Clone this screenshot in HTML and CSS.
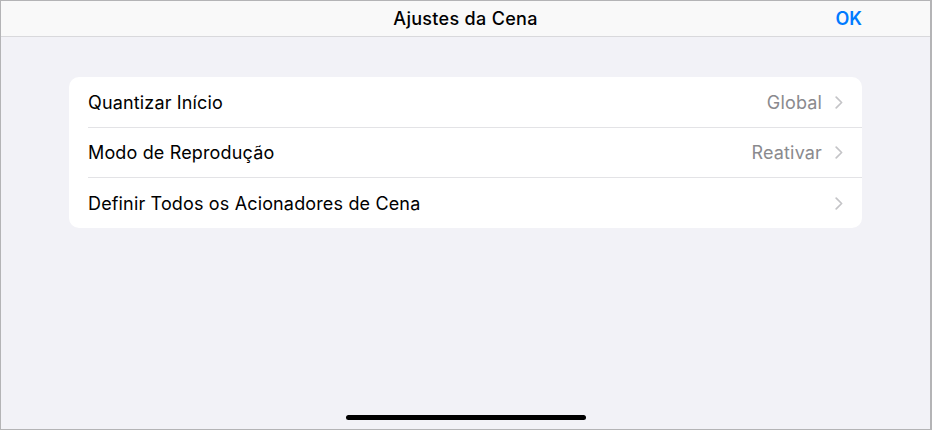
FILE: index.html
```html
<!DOCTYPE html>
<html lang="pt">
<head>
  <meta charset="UTF-8">
  <title>Ajustes da Cena</title>
  <link rel="stylesheet" href="styles.css">
</head>
<body>
  <div class="screen">
    <header class="nav-bar">
      <span class="nav-side"></span>
      <h1 class="nav-title">Ajustes da Cena</h1>
      <span class="nav-side nav-done">OK</span>
    </header>

    <main class="content">
      <ul class="settings-group">
        <li class="settings-row">
          <span class="row-label">Quantizar Início</span>
          <span class="row-value">Global</span>
          <svg class="chevron" viewBox="0 0 8 13" width="8" height="13"><path d="M1.2 1.2 L6.6 6.5 L1.2 11.8" fill="none" stroke="currentColor" stroke-width="1.7" stroke-linecap="round" stroke-linejoin="round"/></svg>
        </li>
        <li class="settings-row">
          <span class="row-label">Modo de Reprodução</span>
          <span class="row-value">Reativar</span>
          <svg class="chevron" viewBox="0 0 8 13" width="8" height="13"><path d="M1.2 1.2 L6.6 6.5 L1.2 11.8" fill="none" stroke="currentColor" stroke-width="1.7" stroke-linecap="round" stroke-linejoin="round"/></svg>
        </li>
        <li class="settings-row">
          <span class="row-label">Definir Todos os Acionadores de Cena</span>
          <span class="row-value"></span>
          <svg class="chevron" viewBox="0 0 8 13" width="8" height="13"><path d="M1.2 1.2 L6.6 6.5 L1.2 11.8" fill="none" stroke="currentColor" stroke-width="1.7" stroke-linecap="round" stroke-linejoin="round"/></svg>
        </li>
      </ul>
    </main>

    <div class="home-indicator"></div>
  </div>
</body>
</html>
```

FILE: styles.css
```css
:root {
  --background: #f2f2f7;
  --bar: #f9f9f9;
  --separator: #e3e3e6;
  --label: #000000;
  --secondary: #8a8a8e;
  --chevron: #c4c4c7;
  --tint: #007aff;
}

html, body {
  margin: 0;
  padding: 0;
  background: #ffffff;
}

body {
  font-family: Inter, "Noto Sans", "Liberation Sans", sans-serif;
  color: var(--label);
  width: 934px;
  height: 431px;
  overflow: hidden;
}

.screen {
  box-sizing: border-box;
  width: 932px;
  height: 430px;
  border: 1px solid #b4b4b6;
  border-right-width: 2px;
  background-color: var(--background);
  display: flex;
  flex-direction: column;
}

.nav-bar {
  display: flex;
  align-items: center;
  height: 35px;
  padding: 0 68px 0 68px;
  background-color: var(--bar);
  border-bottom: 1px solid #d9d9dc;
}

.nav-side {
  width: 120px;
}

.nav-title {
  flex: 1;
  margin: 0;
  text-align: center;
  font-size: 18px;
  font-weight: 500;
  letter-spacing: 0.3px;
}

.nav-done {
  text-align: right;
  color: var(--tint);
  font-size: 18px;
  font-weight: 600;
}

.content {
  flex: 1;
  padding: 40px 68px 0 68px;
}

.settings-group {
  list-style: none;
  margin: 0;
  padding: 0 0 0 19px;
  background-color: #ffffff;
  border-radius: 10px;
}

.settings-row {
  display: flex;
  align-items: center;
  height: 50px;
  padding-right: 19px;
  border-bottom: 1px solid var(--separator);
  box-sizing: border-box;
}

.settings-row:first-child {
  height: 51px;
}

.settings-row:last-child {
  border-bottom: none;
}

.row-label {
  flex: 1;
  font-size: 18px;
  letter-spacing: 0.15px;
}

.row-value {
  font-size: 18px;
  letter-spacing: 0.15px;
  color: var(--secondary);
  margin-right: 13px;
}

.chevron {
  color: var(--chevron);
}

.home-indicator {
  align-self: center;
  width: 240px;
  height: 5px;
  margin-bottom: 9px;
  border-radius: 3px;
  background-color: #000000;
}
```
